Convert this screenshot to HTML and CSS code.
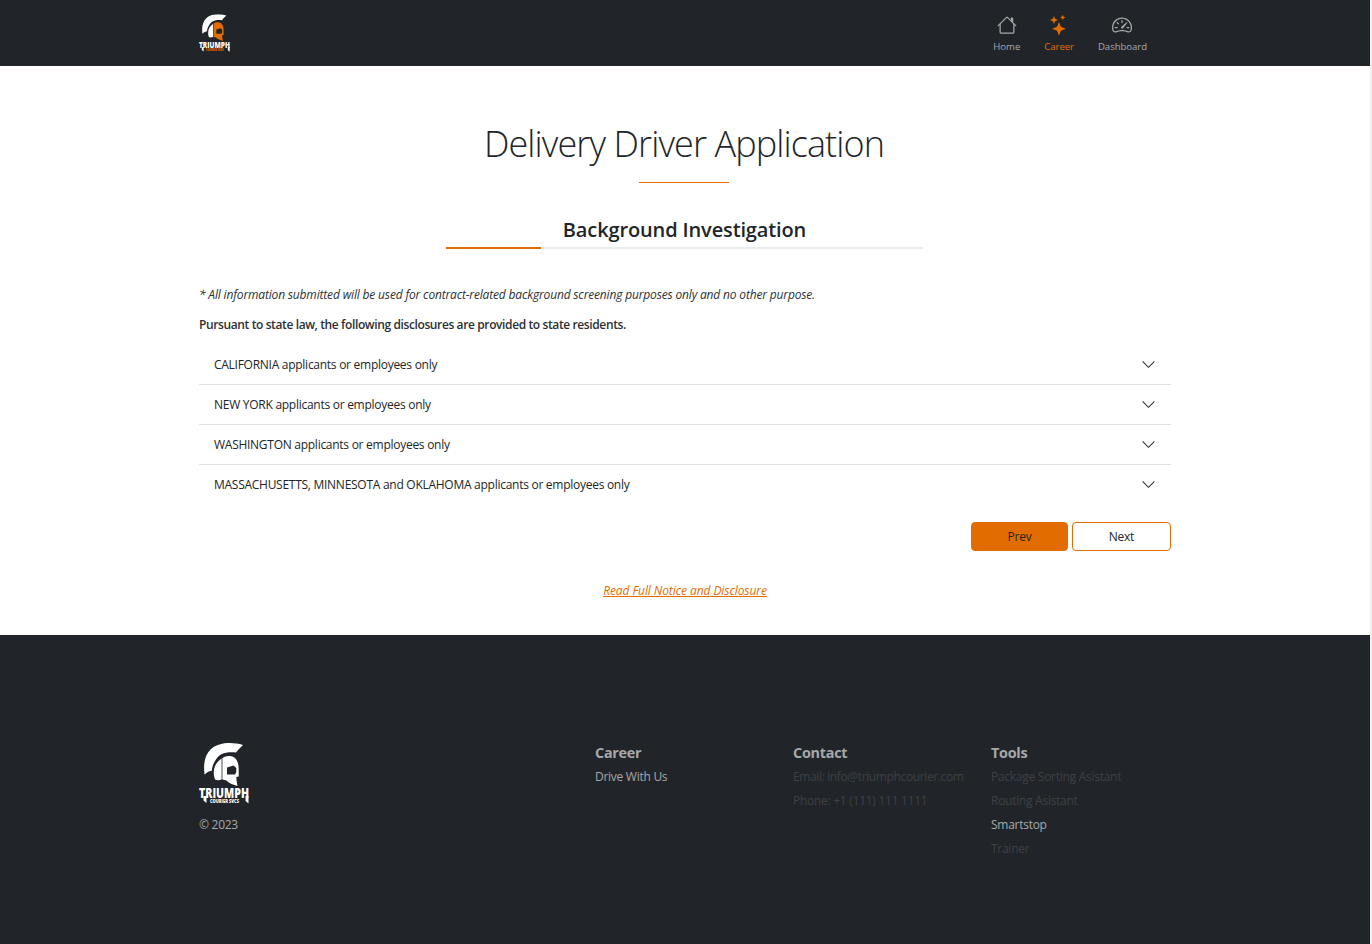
FILE: index.html
```
<!DOCTYPE html>
<html lang="en">
<head>
<meta charset="utf-8">
<title>Delivery Driver Application</title>
<link rel="stylesheet" href="styles.css">
</head>
<body>
<svg class="defs" width="0" height="0">
  <symbol id="crest" viewBox="0 0 50 62">
    <path fill="#fff" d="M5.500 31.500C4.300 21 5.500 12 12 6 20-.8 33-1.200 44 2L39.500 6.500 37 9.500C26 8.500 20.500 11 17 16.500 14 21 13 24 13 27.500Q9 28 5.500 31.500Z"/>
    <path fill="#fff" d="M22.600 15.500V36.500Q19 38 16 36.500 14.500 33 14.800 29C15 23 18 18.500 22.600 15.500Z"/>
    <path class="face" fill-rule="evenodd" d="M23.400 15Q27 12.500 31 13C36.500 13.500 39.500 18 39.700 25.500V33.500L37.300 34 37.500 37 38.500 43Q30 40.500 27.500 37.500L23.400 36.500ZM28 24.500V31.500H36L37.300 29V25L34.500 22.500Z"/>
    <path fill="#fff" d="M4.500 53H7.500V60L4.500 57.500ZM46.500 53H49.500V60.500L46.500 58Z"/>
  </symbol>
  <symbol id="chevron" viewBox="0 0 16 16"><path fill="#212529" fill-rule="evenodd" d="M1.646 4.646a.5.5 0 0 1 .708 0L8 10.293l5.646-5.647a.5.5 0 0 1 .708.708l-6 6a.5.5 0 0 1-.708 0l-6-6a.5.5 0 0 1 0-.708z"/></symbol>
</svg>
<div class="page">
  <header class="navbar">
    <div class="container navbar-row">
      <svg class="logo logo-color" viewBox="0 0 50 62"><use href="#crest"/><text class="brand" x="0" y="54.500" textLength="50" lengthAdjust="spacingAndGlyphs">TRIUMPH</text><text class="brand-sub" x="11" y="59.800" textLength="29" lengthAdjust="spacingAndGlyphs">COURIER SVCS</text></svg>
      <nav class="nav">
        <a class="nav-link"><svg class="icon" viewBox="0 0 16 16"><path fill-rule="evenodd" d="M2 13.500V7h1v6.500a.5.5 0 0 0 .5.5h9a.5.5 0 0 0 .5-.5V7h1v6.500a1.500 1.500 0 0 1-1.500 1.500h-9A1.500 1.500 0 0 1 2 13.500zm11-11V6l-2-2V2.500a.5.5 0 0 1 .5-.5h1a.5.5 0 0 1 .5.5z"/><path fill-rule="evenodd" d="M7.293 1.500a1 1 0 0 1 1.414 0l6.647 6.646a.5.5 0 0 1-.708.708L8 2.207 1.354 8.854a.5.5 0 1 1-.708-.708L7.293 1.500z"/></svg><span>Home</span></a>
        <a class="nav-link active"><svg class="icon" viewBox="0 0 16 16"><path d="M7.657 6.247c.11-.33.576-.33.686 0l.645 1.937a2.890 2.890 0 0 0 1.829 1.828l1.936.645c.33.11.33.576 0 .686l-1.937.645a2.890 2.890 0 0 0-1.828 1.829l-.645 1.936a.361.361 0 0 1-.686 0l-.645-1.937a2.890 2.890 0 0 0-1.828-1.828l-1.937-.645a.361.361 0 0 1 0-.686l1.937-.645a2.890 2.890 0 0 0 1.828-1.828l.645-1.937zM3.794 1.148a.217.217 0 0 1 .412 0l.387 1.162c.173.518.579.924 1.097 1.097l1.162.387a.217.217 0 0 1 0 .412l-1.162.387A1.734 1.734 0 0 0 4.593 5.690l-.387 1.162a.217.217 0 0 1-.412 0L3.407 5.690A1.734 1.734 0 0 0 2.310 4.593l-1.162-.387a.217.217 0 0 1 0-.412l1.162-.387A1.734 1.734 0 0 0 3.407 2.310l.387-1.162zM10.863.099a.145.145 0 0 1 .274 0l.258.774c.115.346.386.617.732.732l.774.258a.145.145 0 0 1 0 .274l-.774.258a1.156 1.156 0 0 0-.732.732l-.258.774a.145.145 0 0 1-.274 0l-.258-.774a1.156 1.156 0 0 0-.732-.732L9.100 2.137a.145.145 0 0 1 0-.274l.774-.258c.346-.115.617-.386.732-.732L10.863.1z"/></svg><span>Career</span></a>
        <a class="nav-link"><svg class="icon" viewBox="0 0 16 16"><path d="M8 4a.5.5 0 0 1 .5.5V6a.5.5 0 0 1-1 0V4.500A.5.5 0 0 1 8 4zM3.732 5.732a.5.5 0 0 1 .707 0l.915.914a.5.5 0 1 1-.708.708l-.914-.915a.5.5 0 0 1 0-.707zM2 10a.5.5 0 0 1 .5-.5h1.586a.5.5 0 0 1 0 1H2.500A.5.5 0 0 1 2 10zm9.500 0a.5.5 0 0 1 .5-.5h1.500a.5.5 0 0 1 0 1H12a.5.5 0 0 1-.5-.5zm.754-4.246a.389.389 0 0 0-.527-.02L7.547 9.310a.91.91 0 1 0 1.302 1.258l3.434-4.297a.389.389 0 0 0-.029-.518z"/><path fill-rule="evenodd" d="M0 10a8 8 0 1 1 15.547 2.661c-.442 1.253-1.845 1.602-2.932 1.250C11.309 13.488 9.475 13 8 13c-1.474 0-3.310.488-4.615.911-1.087.352-2.490.003-2.932-1.250A7.988 7.988 0 0 1 0 10zm8-7a7 7 0 0 0-6.603 9.329c.203.575.923.876 1.680.63C4.397 12.533 6.358 12 8 12s3.604.532 4.923.96c.757.245 1.477-.056 1.680-.631A7 7 0 0 0 8 3z"/></svg><span>Dashboard</span></a>
      </nav>
    </div>
  </header>

  <main class="container main">
    <div class="heading">
      <h1 class="title">Delivery Driver Application</h1>
      <div class="rule"></div>
      <h2 class="step">Background Investigation</h2>
      <div class="progress"><div class="progress-bar" style="width:20%"></div></div>
    </div>
    <p class="note"><em>* All information submitted will be used for contract-related background screening purposes only and no other purpose.</em></p>
    <p class="lead">Pursuant to state law, the following disclosures are provided to state residents.</p>
    <div class="accordion">
      <div class="item"><span>CALIFORNIA applicants or employees only</span><svg class="chevron"><use href="#chevron"/></svg></div>
      <div class="item"><span>NEW YORK applicants or employees only</span><svg class="chevron"><use href="#chevron"/></svg></div>
      <div class="item"><span>WASHINGTON applicants or employees only</span><svg class="chevron"><use href="#chevron"/></svg></div>
      <div class="item"><span>MASSACHUSETTS, MINNESOTA and OKLAHOMA applicants or employees only</span><svg class="chevron"><use href="#chevron"/></svg></div>
    </div>
    <div class="actions">
      <button class="btn btn-fill">Prev</button>
      <button class="btn btn-outline">Next</button>
    </div>
    <p class="full"><a>Read Full Notice and Disclosure</a></p>
  </main>

  <footer class="footer">
    <div class="container footer-grid">
      <div class="footer-brand">
        <svg class="logo-large" viewBox="0 0 50 62"><use href="#crest"/><text class="brand" x="0" y="54.500" textLength="50" lengthAdjust="spacingAndGlyphs">TRIUMPH</text><text class="brand-sub" x="11" y="59.800" textLength="29" lengthAdjust="spacingAndGlyphs">COURIER SVCS</text></svg>
        <span>© 2023</span>
      </div>
      <div class="col"><h3>Career</h3><a>Drive With Us</a></div>
      <div class="col"><h3>Contact</h3><a class="off email">Email: info@triumphcourier.com</a><a class="off">Phone: +1 (111) 111 1111</a></div>
      <div class="col"><h3>Tools</h3><a class="off">Package Sorting Asistant</a><a class="off">Routing Asistant</a><a>Smartstop</a><a class="off">Trainer</a></div>
    </div>
  </footer>
</div>
</body>
</html>
```
FILE: styles.css
```
* { box-sizing: border-box; }
body { margin: 0; background: #f0f0f0; font-family: "Open Sans", "Noto Sans", sans-serif; font-size: 12px; line-height: 18px; color: #212529; letter-spacing: -0.27px; }
h1, h2, h3, p { margin: 0; }
.defs { position: absolute; }
.page { width: 1370px; height: 944px; display: flex; flex-direction: column; background: #fff; overflow: hidden; white-space: nowrap; }
.container { width: 972px; margin: 0 auto; }

.navbar { height: 66px; background: #212529; }
.navbar-row { display: flex; justify-content: space-between; padding-top: 14px; }
.logo { width: 31px; height: 39px; overflow: visible; }
.logo-color { --accent: #e36c00; }
.face, .brand-sub { fill: var(--accent, #fff); }
.brand { fill: #fff; font: 800 14px "Open Sans", sans-serif; letter-spacing: 0; }
.brand-sub { font: 800 5px "Open Sans", sans-serif; letter-spacing: 0; }
.nav { display: flex; gap: 24px; padding: 1px 24px 0 0; }
.nav-link { display: flex; flex-direction: column; align-items: center; color: #a7a8a9; font-size: 9.600px; line-height: 14px; letter-spacing: -0.05px; }
.nav-link.active { color: #e36c00; }
.icon { width: 20px; height: 20px; margin-bottom: 5px; fill: currentColor; }

.main { height: 569px; display: flex; flex-direction: column; }
.heading { width: 970px; padding-top: 53px; }
.title { text-align: center; font-size: 36px; line-height: 50px; font-weight: 300; letter-spacing: -0.9px; }
.rule { width: 90px; height: 1px; margin: 13px auto 0; background: #e36c00; }
.step { margin-top: 34px; padding-left: 1px; text-align: center; font-size: 20px; line-height: 26px; font-weight: 600; letter-spacing: -0.13px; }
.progress { width: 477px; height: 2px; margin: 4px auto 0; background: #e9ecef; }
.progress-bar { height: 2px; background: #e36c00; }
.note { margin-top: 37px; color: #2c3034; letter-spacing: -0.165px; }
.lead { margin-top: 12px; color: #2c3034; font-weight: 600; letter-spacing: -0.385px; }
.accordion { margin-top: 11px; }
.item { height: 40px; padding: 0 15px; display: flex; align-items: center; justify-content: space-between; border-bottom: 1px solid #dee2e6; }
.item:last-child { border-bottom-color: transparent; }
.chevron { width: 15px; height: 15px; }
.actions { display: flex; justify-content: flex-end; gap: 4px; margin-top: 17px; }
.btn { height: 29px; padding: 0; border: 1px solid #e36c00; border-radius: 4px; font: inherit; letter-spacing: inherit; color: #212529; }
.btn-fill { width: 97px; background: #e36c00; }
.btn-outline { width: 99px; background: #fff; }
.full { margin-top: 31px; text-align: center; font-style: italic; letter-spacing: -0.08px; text-decoration: underline; color: #e36c00; }

.footer { flex: 1; background: #212529; color: #a7a8a9; }
.footer-grid { display: grid; grid-template-columns: 396px 198px 198px 180px; padding-top: 108px; }
.footer-brand { display: flex; flex-direction: column; gap: 11px; }
.logo-large { width: 50px; height: 62px; overflow: visible; }
.col { display: flex; flex-direction: column; gap: 6px; }
.col h3 { margin-bottom: -1px; font-size: 14.400px; line-height: 20px; font-weight: 700; }
.off { color: #3d4144; }
.email { letter-spacing: -0.37px; }
```
